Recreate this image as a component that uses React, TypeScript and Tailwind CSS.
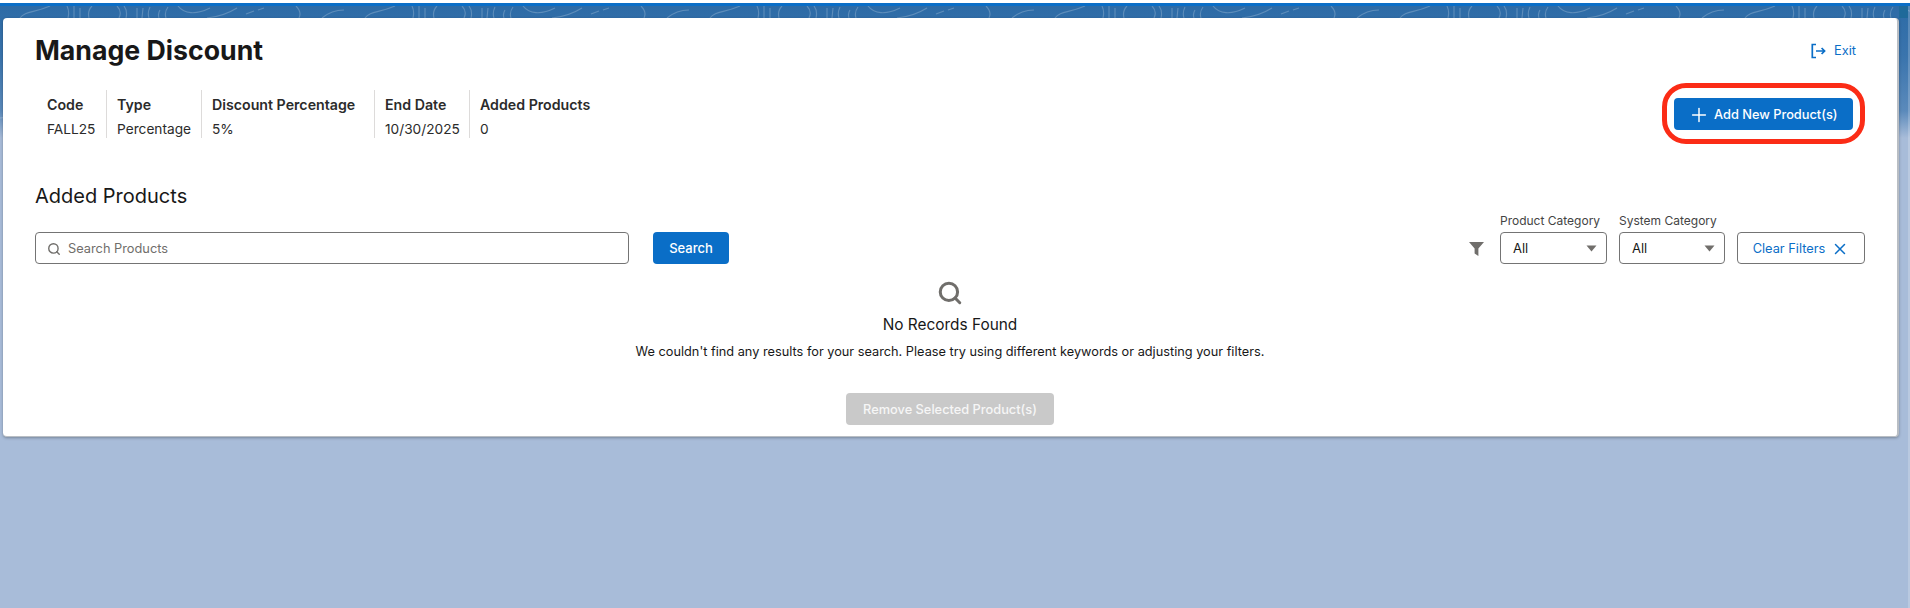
import { Plus, Search, X } from "lucide-react";

const summary = [
  { label: "Code", value: "FALL25", width: "w-[72px] pl-[12px]" },
  { label: "Type", value: "Percentage", width: "w-[95px] pl-[10px]" },
  { label: "Discount Percentage", value: "5%", width: "w-[173px] pl-[10px]" },
  { label: "End Date", value: "10/30/2025", width: "w-[95px] pl-[10px]" },
  { label: "Added Products", value: "0", width: "w-[140px] pl-[10px]" },
];

function ExitIcon() {
  return (
    <svg width="15" height="16" viewBox="0 0 15 16" fill="none" stroke="#0a6ec7" strokeWidth="1.7" aria-hidden="true">
      <path d="M5 1.5H1.3v13H5" />
      <path d="M5 8h8.6M10.6 5l3 3-3 3" />
    </svg>
  );
}

function Caret() {
  return (
    <svg width="11" height="7" viewBox="0 0 11 7" fill="#706e6b" aria-hidden="true">
      <path d="M0.5 0.5h10L5.5 6.5z" />
    </svg>
  );
}

function Funnel() {
  return (
    <svg width="15" height="14" viewBox="0 0 15 14" fill="#706e6b" aria-hidden="true">
      <path d="M0 0h15L9.4 6.6V14L5.6 11.6V6.6z" />
    </svg>
  );
}

function Filter({ label, width }: { label: string; width: string }) {
  return (
    <div className={`flex flex-col ${width}`}>
      <span className="mb-[3px] text-xs leading-4 text-[#444444]">{label}</span>
      <div className="flex h-[32px] items-center justify-between rounded border border-[#747474] pl-[12px] pr-[9px] pt-px text-[13px] text-[#181818]">
        All
        <Caret />
      </div>
    </div>
  );
}

function Contours() {
  return (
    <svg className="absolute inset-x-0 top-0 h-[135px] w-full" aria-hidden="true">
      <defs>
        <pattern id="contour" width="345" height="135" patternUnits="userSpaceOnUse">
          <g fill="none" stroke="#ffffff" strokeOpacity="0.22" strokeWidth="1.1">
            <path d="M20 12c5-7 14-5 30-12" />
            <path d="M67 0c2 4 2 8 1 12M74 0v12M80 2v10M92 0c-4 4-4 8-3 12" />
            <path d="M117 0c4 4 4 8 2 12M124 0c3 4 3 8 2 12M137 2v10M143 2l-1 10M150 1c-2 4-2 8-1 11M160 4c-2 3-2 5-1 8M168 1c-3 4-3 8-2 11" />
            <path d="M178 0c6 8 18 9 32 2" />
            <path d="M207 12c10-1 22-5 30-10M246 8l8-3M258 4l6-2" />
            <path d="M296 0c4 4 5 8 3 12M322 12c6-5 14-8 22-8" />
            <path d="M10 40c14 22 4 46-4 62M330 30c-20 14-8 40 10 52M20 104c-8 6-14 8-20 8M345 60c-12 30-24 40-34 50" />
          </g>
        </pattern>
      </defs>
      <rect width="100%" height="100%" fill="url(#contour)" />
    </svg>
  );
}

export default function App() {
  return (
    <div className="flex h-[608px] w-full flex-col overflow-hidden bg-white font-[Inter,sans-serif]">
      <div className="mt-[3px] h-[3px] bg-[#0a6ec7]" />
      <main className="relative flex-1 bg-[linear-gradient(#2d6ba6_0px,#3a74ad_50px,#5b8abb_105px,#a8bcd9_132px)] pl-[3px] pr-[11px] pt-[12px]">
        <Contours />
        <div className="absolute right-[2px] top-0 h-[12px] w-[9px] bg-[#1f6a9a]" />
        <div className="absolute inset-y-0 right-0 w-[2px] bg-white/20" />
        <section className="relative h-[419px] rounded-[4px] border-r-2 border-b border-[#b9bec4] bg-white px-[32px] pt-[14px] shadow-[0_1px_3px_rgba(0,0,0,0.3)]">
          <div className="flex items-center justify-between pr-[9px]">
            <h1 className="text-[26.7px] font-bold leading-9 text-[#181818]">Manage Discount</h1>
            <button className="mt-px flex items-center gap-[8px] text-[12.8px] text-[#0a6ec7]">
              <ExitIcon />
              Exit
            </button>
          </div>

          <div className="mt-[22px] flex items-start justify-between">
            <div className="flex">
              {summary.map((item) => (
                <div key={item.label} className={`h-[48px] border-r border-[#dddbda] pt-[3px] text-[14.2px] leading-[23px] text-[#2b2b2b] last:border-r-0 ${item.width}`}>
                  <div className="font-semibold">{item.label}</div>
                  <div className="mt-[2px] text-[13.7px]">{item.value}</div>
                </div>
              ))}
            </div>
            <div className="relative mr-[12px] mt-[8px]">
              <button className="flex h-[32px] w-[179px] items-center gap-[4px] rounded bg-[#0a6ec7] pl-[14px] pt-px text-[12.8px] font-medium text-white">
                <Plus size={22} strokeWidth={1.6} />
                Add New Product(s)
              </button>
              <div className="absolute -inset-x-[12px] -bottom-[14px] -top-[15px] rounded-[24px] border-[5px] border-[#fb2c16]" />
            </div>
          </div>

          <h2 className="mt-[44px] text-xl leading-7 text-[#181818]">Added Products</h2>

          <div className="mt-[3px] flex items-end justify-between">
            <div className="flex gap-[24px]">
              <div className="flex h-[32px] w-[594px] items-center gap-[7px] rounded border border-[#747474] pl-[11px] pt-px text-[12.8px] text-[#706e6b]">
                <Search size={14} strokeWidth={2.4} />
                Search Products
              </div>
              <button className="h-[32px] w-[76px] rounded bg-[#0a6ec7] pt-px text-[13px] font-medium text-white">Search</button>
            </div>
            <div className="flex items-end gap-[12px]">
              <div className="mb-[8px] mr-[4px]">
                <Funnel />
              </div>
              <Filter label="Product Category" width="w-[107px]" />
              <Filter label="System Category" width="w-[106px]" />
              <button className="flex h-[32px] w-[128px] items-center justify-center gap-[6px] rounded border border-[#747474] pt-px text-[12.8px] text-[#0a6ec7]">
                Clear Filters
                <X size={18} strokeWidth={2} />
              </button>
            </div>
          </div>

          <div className="mt-[16px] flex flex-col items-center text-[#181818]">
            <Search size={26} strokeWidth={2.8} className="text-[#706e6b]" />
            <p className="mt-[7px] text-[15.4px] leading-6">No Records Found</p>
            <p className="mt-[5px] text-[12.75px] leading-5">
              We couldn't find any results for your search. Please try using different keywords or adjusting your filters.
            </p>
            <button className="mt-[31px] h-[32px] w-[208px] rounded bg-[#c9c9c9] pt-px text-[12.8px] font-medium text-[#f6f6f6]">
              Remove Selected Product(s)
            </button>
          </div>
        </section>
      </main>
    </div>
  );
}
